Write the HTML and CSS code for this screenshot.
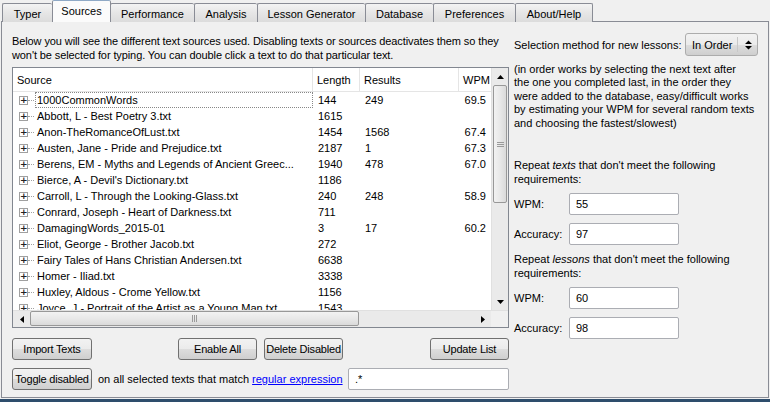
FILE: index.html
```html
<!DOCTYPE html>
<html>
<head>
<meta charset="utf-8">
<link rel="stylesheet" href="styles.css">
</head>
<body>
<div class="window">
  <div class="tabbar">
    <div class="tab w-typer">Typer</div>
    <div class="tab active w-sources">Sources</div>
    <div class="tab w-perf">Performance</div>
    <div class="tab w-analysis">Analysis</div>
    <div class="tab w-lesson">Lesson Generator</div>
    <div class="tab w-db">Database</div>
    <div class="tab w-prefs">Preferences</div>
    <div class="tab w-about">About/Help</div>
  </div>
  <div class="pane">
    <div class="left">
      <p class="desc">Below you will see the different text sources used. Disabling texts or sources deactivates them so they won't be selected for typing. You can double click a text to do that particular text.</p>
      <div class="tree">
        <div class="tree-main">
          <div class="viewport">
            <div class="header">
              <div class="hcell c-src">Source</div>
              <div class="hcell c-len">Length</div>
              <div class="hcell c-res">Results</div>
              <div class="hcell c-wpm">WPM</div>
            </div>
            <div class="rows">
              <div class="row focus"><span class="exp"><span class="box">+</span><span class="dots"></span></span><span class="cell c-src name">1000CommonWords</span><span class="cell c-len">144</span><span class="cell c-res">249</span><span class="cell c-wpm num">69.5</span></div>
              <div class="row"><span class="exp"><span class="box">+</span><span class="dots"></span></span><span class="cell c-src name">Abbott, L - Best Poetry 3.txt</span><span class="cell c-len">1615</span><span class="cell c-res"></span><span class="cell c-wpm num"></span></div>
              <div class="row"><span class="exp"><span class="box">+</span><span class="dots"></span></span><span class="cell c-src name">Anon-TheRomanceOfLust.txt</span><span class="cell c-len">1454</span><span class="cell c-res">1568</span><span class="cell c-wpm num">67.4</span></div>
              <div class="row"><span class="exp"><span class="box">+</span><span class="dots"></span></span><span class="cell c-src name">Austen, Jane - Pride and Prejudice.txt</span><span class="cell c-len">2187</span><span class="cell c-res">1</span><span class="cell c-wpm num">67.3</span></div>
              <div class="row"><span class="exp"><span class="box">+</span><span class="dots"></span></span><span class="cell c-src name">Berens, EM - Myths and Legends of Ancient Greec...</span><span class="cell c-len">1940</span><span class="cell c-res">478</span><span class="cell c-wpm num">67.0</span></div>
              <div class="row"><span class="exp"><span class="box">+</span><span class="dots"></span></span><span class="cell c-src name">Bierce, A - Devil's Dictionary.txt</span><span class="cell c-len">1186</span><span class="cell c-res"></span><span class="cell c-wpm num"></span></div>
              <div class="row"><span class="exp"><span class="box">+</span><span class="dots"></span></span><span class="cell c-src name">Carroll, L - Through the Looking-Glass.txt</span><span class="cell c-len">240</span><span class="cell c-res">248</span><span class="cell c-wpm num">58.9</span></div>
              <div class="row"><span class="exp"><span class="box">+</span><span class="dots"></span></span><span class="cell c-src name">Conrard, Joseph - Heart of Darkness.txt</span><span class="cell c-len">711</span><span class="cell c-res"></span><span class="cell c-wpm num"></span></div>
              <div class="row"><span class="exp"><span class="box">+</span><span class="dots"></span></span><span class="cell c-src name">DamagingWords_2015-01</span><span class="cell c-len">3</span><span class="cell c-res">17</span><span class="cell c-wpm num">60.2</span></div>
              <div class="row"><span class="exp"><span class="box">+</span><span class="dots"></span></span><span class="cell c-src name">Eliot, George - Brother Jacob.txt</span><span class="cell c-len">272</span><span class="cell c-res"></span><span class="cell c-wpm num"></span></div>
              <div class="row"><span class="exp"><span class="box">+</span><span class="dots"></span></span><span class="cell c-src name">Fairy Tales of Hans Christian Andersen.txt</span><span class="cell c-len">6638</span><span class="cell c-res"></span><span class="cell c-wpm num"></span></div>
              <div class="row"><span class="exp"><span class="box">+</span><span class="dots"></span></span><span class="cell c-src name">Homer - Iliad.txt</span><span class="cell c-len">3338</span><span class="cell c-res"></span><span class="cell c-wpm num"></span></div>
              <div class="row"><span class="exp"><span class="box">+</span><span class="dots"></span></span><span class="cell c-src name">Huxley, Aldous - Crome Yellow.txt</span><span class="cell c-len">1156</span><span class="cell c-res"></span><span class="cell c-wpm num"></span></div>
              <div class="row"><span class="exp"><span class="box">+</span><span class="dots"></span></span><span class="cell c-src name">Joyce, J - Portrait of the Artist as a Young Man.txt</span><span class="cell c-len">1543</span><span class="cell c-res"></span><span class="cell c-wpm num"></span></div>
            </div>
          </div>
          <div class="vscroll">
            <div class="sbtn"><svg width="7" height="4" viewBox="0 0 7 4"><path d="M0 4 L3.5 0 L7 4 Z" fill="#000"/></svg></div>
            <div class="vtrack">
              <div class="vthumb"><span class="grip-h"></span></div>
            </div>
            <div class="sbtn"><svg width="7" height="4" viewBox="0 0 7 4"><path d="M0 0 L3.5 4 L7 0 Z" fill="#000"/></svg></div>
          </div>
        </div>
        <div class="tree-foot">
          <div class="hscroll">
            <div class="sbtn"><svg width="4" height="7" viewBox="0 0 4 7"><path d="M4 0 L0 3.5 L4 7 Z" fill="#000"/></svg></div>
            <div class="htrack">
              <div class="hthumb"><span class="grip-v"></span></div>
            </div>
            <div class="sbtn"><svg width="4" height="7" viewBox="0 0 4 7"><path d="M0 0 L4 3.5 L0 7 Z" fill="#000"/></svg></div>
          </div>
          <div class="corner"></div>
        </div>
      </div>
      <div class="btnrow">
        <button class="btn b-import">Import Texts</button>
        <span class="spacer-a"></span>
        <button class="btn b-enable">Enable All</button>
        <button class="btn b-delete">Delete Disabled</button>
        <span class="spacer-b"></span>
        <button class="btn b-update">Update List</button>
      </div>
      <div class="togglerow">
        <button class="btn b-toggle">Toggle disabled</button>
        <span class="togtext">on all selected texts that match <a class="link" href="#">regular expression</a></span>
        <div class="field regex">.*</div>
      </div>
    </div>
    <div class="right">
      <div class="selrow">
        <span>Selection method for new lessons:</span>
        <div class="combo">
          <span class="combo-text">In Order</span>
          <span class="combo-sep"></span>
          <svg class="combo-arrows" width="7" height="10" viewBox="0 0 7 10"><path d="M0 4 L3.5 0.5 L7 4 Z M0 6 L3.5 9.5 L7 6 Z" fill="#000"/></svg>
        </div>
      </div>
      <p class="explain">(in order works by selecting the next text after<br>the one you completed last, in the order they<br>were added to the database, easy/difficult works<br>by estimating your WPM for several random texts<br>and choosing the fastest/slowest)</p>
      <p class="req">Repeat <i>texts</i> that don't meet the following requirements:</p>
      <div class="form">
        <div class="frow"><span class="flabel">WPM:</span><div class="field small">55</div></div>
        <div class="frow"><span class="flabel">Accuracy:</span><div class="field small">97</div></div>
      </div>
      <p class="req req2">Repeat <i>lessons</i> that don't meet the following requirements:</p>
      <div class="form">
        <div class="frow"><span class="flabel">WPM:</span><div class="field small">60</div></div>
        <div class="frow"><span class="flabel">Accuracy:</span><div class="field small">98</div></div>
      </div>
    </div>
  </div>
  <div class="frame-bottom"></div>
</div>
</body>
</html>
```
FILE: styles.css
```css
* { box-sizing: border-box; }
html, body {
  margin: 0;
  padding: 0;
  background: #f0f0f0;
}
body {
  font-family: "Liberation Sans", Arial, sans-serif;
  font-size: 11px;
  color: #000;
  width: 770px;
  height: 402px;
  overflow: hidden;
}
.window {
  width: 770px;
  height: 402px;
  display: flex;
  flex-direction: column;
}
.tabbar {
  display: flex;
  align-items: flex-end;
  padding-left: 2px;
  height: 22px;
  position: relative;
  z-index: 2;
}
.tab {
  height: 19px;
  border: 1px solid #898c95;
  border-bottom: none;
  border-right: none;
  border-radius: 2px 2px 0 0;
  background: linear-gradient(#f3f3f3, #e6e6e6 50%, #dcdcdc);
  display: flex;
  align-items: center;
  justify-content: center;
  padding-top: 1px;
  white-space: nowrap;
}
.tab.w-about { border-right: 1px solid #898c95; }
.tab.active {
  height: 22px;
  background: #fbfbfb;
  border-color: #8fa9c6 #898c95 #898c95 #898c95;
  border-right: 1px solid #898c95;
  margin-right: -1px;
  padding-bottom: 2px;
  position: relative;
}
.w-typer { width: 50px; }
.w-sources { width: 59px; }
.w-perf { width: 84px; }
.w-analysis { width: 63px; }
.w-lesson { width: 108px; }
.w-db { width: 68px; }
.w-prefs { width: 82px; }
.w-about { width: 78px; }

.pane {
  margin: -1px 1px 0 1px;
  height: 377px;
  border: 1px solid #898c95;
  background: #f0f0f0;
  display: flex;
  padding: 0 10px 0 10px;
  gap: 5px;
}
.frame-bottom {
  margin-top: 1px;
  height: 3px;
  background: #2e4d6c;
}
.left {
  width: 497px;
  display: flex;
  flex-direction: column;
}
.desc {
  margin: 12px 0 0 0;
  line-height: 14px;
  height: 28px;
  letter-spacing: -0.1px;
}
.tree {
  margin-top: 5px;
  height: 261px;
  border: 1px solid #828790;
  background: #fff;
  display: flex;
  flex-direction: column;
}
.tree-main {
  flex: 1;
  display: flex;
  min-height: 0;
}
.viewport {
  flex: 1;
  overflow: hidden;
  min-width: 0;
}
.header {
  display: flex;
  height: 24px;
  border-bottom: 1px solid #e5e5e5;
  background: #fff;
}
.hcell {
  height: 23px;
  line-height: 24px;
  padding-left: 4px;
  border-right: 1px solid #e5e5e5;
  white-space: nowrap;
  overflow: hidden;
  flex: none;
}
.hcell.c-wpm { border-right: none; }
.c-src { width: 300px; }
.c-len { width: 47px; }
.c-res { width: 99px; }
.c-wpm { width: 33px; }
.row {
  display: flex;
  height: 16px;
  line-height: 16px;
  position: relative;
  white-space: nowrap;
}
.row .cell {
  flex: none;
  overflow: hidden;
  padding-left: 5px;
}
.row .num { text-align: right; padding-left: 0; padding-right: 6px; width: 33px; }
.exp {
  position: absolute;
  left: 6px;
  top: 4px;
  display: flex;
  align-items: center;
}
.box {
  width: 9px;
  height: 9px;
  border: 1px solid #a0a0a0;
  background: #fff;
  font-size: 9px;
  line-height: 7px;
  text-align: center;
  font-family: "DejaVu Sans", sans-serif;
  font-weight: bold;
  color: #222;
}
.dots {
  width: 6px;
  border-top: 1px dotted #a0a0a0;
}
.row .c-src.name {
  padding-left: 24px;
}
.row.focus .c-src.name {
  position: relative;
}
.row.focus .c-src.name::after {
  content: "";
  position: absolute;
  left: 22px;
  right: 0;
  top: 0;
  bottom: 0;
  border: 1px dotted #888;
}
.vscroll {
  width: 17px;
  display: flex;
  flex-direction: column;
  background: #eaeaea;
  border-left: 1px solid #e0e0e0;
}
.sbtn {
  width: 17px;
  height: 17px;
  display: flex;
  align-items: center;
  justify-content: center;
  flex: none;
}
.vscroll .sbtn { width: 16px; }
.vtrack { flex: 1; }
.vthumb {
  margin: 0 1px;
  height: 118px;
  border: 1px solid #989898;
  border-radius: 2px;
  background: linear-gradient(90deg, #f2f2f2, #e8e8e8 50%, #dadada);
  display: flex;
  align-items: center;
  justify-content: center;
}
.grip-h {
  width: 7px;
  height: 5px;
  border-top: 1px solid #9a9a9a;
  border-bottom: 1px solid #9a9a9a;
  position: relative;
}
.grip-h::after {
  content: "";
  position: absolute;
  left: 0; right: 0; top: 1px;
  border-top: 1px solid #9a9a9a;
}
.tree-foot {
  height: 17px;
  display: flex;
  border-top: 1px solid #e0e0e0;
}
.hscroll {
  flex: 1;
  display: flex;
  background: #eaeaea;
}
.hscroll .sbtn { height: 16px; }
.htrack { flex: 1; }
.hthumb {
  width: 329px;
  height: 15px;
  border: 1px solid #989898;
  border-radius: 2px;
  background: linear-gradient(#f2f2f2, #e8e8e8 50%, #dadada);
  display: flex;
  align-items: center;
  justify-content: center;
}
.grip-v {
  width: 5px;
  height: 7px;
  border-left: 1px solid #9a9a9a;
  border-right: 1px solid #9a9a9a;
  position: relative;
}
.grip-v::after {
  content: "";
  position: absolute;
  top: 0; bottom: 0; left: 1px;
  border-left: 1px solid #9a9a9a;
}
.corner {
  width: 17px;
  background: #f0f0f0;
}
.btnrow {
  margin-top: 10px;
  display: flex;
  height: 22px;
}
.spacer-a { width: 86px; }
.spacer-b { flex: 1; }
.btn {
  font-family: inherit;
  font-size: 11px;
  color: #000;
  height: 22px;
  border: 1px solid #707070;
  border-radius: 3px;
  background: linear-gradient(#f2f2f2, #ebebeb 50%, #dddddd 51%, #cfcfcf);
  padding: 0;
  margin: 0;
  white-space: nowrap;
  letter-spacing: -0.2px;
}
.b-import { width: 80px; }
.b-enable { width: 79px; }
.b-delete { width: 79px; margin-left: 7px; }
.b-update { width: 79px; }
.b-toggle { width: 80px; }
.togglerow {
  margin-top: 8px;
  display: flex;
  align-items: center;
  height: 22px;
}
.togtext {
  margin-left: 6px;
  white-space: nowrap;
}
.link { color: #0000ff; text-decoration: underline; }
.field {
  height: 22px;
  border: 1px solid #abadb3;
  border-radius: 2px;
  background: #fff;
  padding-left: 6px;
  line-height: 20px;
}
.regex {
  margin-left: auto;
  width: 161px;
}
.right {
  flex: 1;
  display: flex;
  flex-direction: column;
}
.selrow {
  margin-top: 11px;
  display: flex;
  align-items: center;
  justify-content: space-between;
  height: 23px;
}
.combo {
  width: 73px;
  height: 23px;
  border: 1px solid #acacac;
  border-radius: 3px;
  background: linear-gradient(#f2f2f2, #ebebeb 50%, #dddddd 51%, #cfcfcf);
  display: flex;
  align-items: center;
  padding-left: 6px;
}
.combo-text { width: 45px; }
.combo-sep {
  width: 1px;
  height: 15px;
  background: #c8c8c8;
}
.combo-arrows { margin-left: 7px; }
.explain {
  margin: 7px 0 0 0;
  line-height: 13.4px;
  white-space: nowrap;
}
.req {
  margin: 28px 0 0 0;
  line-height: 14px;
}
.req2 { margin-top: 7px; }
.form {
  display: flex;
  flex-direction: column;
  gap: 8px;
  margin-top: 7px;
}
.frow {
  display: flex;
  align-items: center;
  height: 22px;
}
.flabel { width: 55px; }
.field.small { width: 110px; }
```
